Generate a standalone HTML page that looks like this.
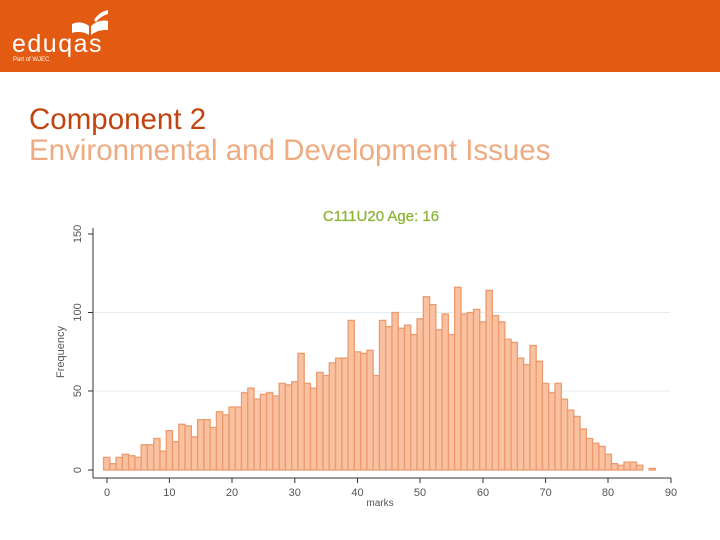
<!DOCTYPE html>
<html><head><meta charset="utf-8"><style>
body{margin:0;width:720px;height:540px;background:#fff;overflow:hidden;font-family:"Liberation Sans",sans-serif;position:relative}
.hdr{position:absolute;left:0;top:0;width:720px;height:72px;background:#e35b12}
.t1{position:absolute;left:29px;top:104px;font-size:29.5px;color:#c0440f;line-height:32px}
.t2{position:absolute;left:29px;top:135px;font-size:29.5px;color:#eeab82;line-height:32px}
rect{vector-effect:non-scaling-stroke}
</style></head><body>
<div class="hdr">
<svg width="160" height="72" style="position:absolute;left:0;top:0">
<path d="M72 24 Q81 20 89 26 L89 35 Q81 30 72 33 Z" fill="#fff"/>
<path d="M91 26 Q99 19 108 21 L108 30 Q99 29 91 35 Z" fill="#fff"/>
<path d="M94 20 Q99 12 108 10 L108 14 Q101 16 96 22 Z" fill="#fff"/>
<text x="12" y="52" font-family="Liberation Sans" font-size="25" letter-spacing="1.5" fill="#fff">eduqas</text>
<text x="13" y="61" font-family="Liberation Sans" font-size="6" fill="#fff">Part of WJEC</text>
</svg>
</div>
<div class="t1">Component 2</div>
<div class="t2">Environmental and Development Issues</div>
<svg width="720" height="540" style="position:absolute;left:0;top:0">
<text x="381" y="221" text-anchor="middle" font-size="15" fill="#8db33a" stroke="#8db33a" stroke-width="0.3" font-family="Liberation Sans">C111U20 Age: 16</text>
<line x1="95" y1="312.5" x2="670" y2="312.5" stroke="#e4eef2"/>
<line x1="95" y1="391" x2="670" y2="391" stroke="#e4eef2"/>
<line x1="93" y1="228" x2="93" y2="478" stroke="#333"/>
<line x1="93" y1="478" x2="671" y2="478" stroke="#333"/>
<g stroke="#333"><line x1="88" y1="470" x2="93" y2="470"/><line x1="88" y1="391" x2="93" y2="391"/><line x1="88" y1="312.5" x2="93" y2="312.5"/><line x1="88" y1="234" x2="93" y2="234"/>
<line x1="107" y1="478" x2="107" y2="483"/><line x1="169.4" y1="478" x2="169.4" y2="483"/><line x1="232" y1="478" x2="232" y2="483"/><line x1="294.8" y1="478" x2="294.8" y2="483"/><line x1="357.5" y1="478" x2="357.5" y2="483"/><line x1="420" y1="478" x2="420" y2="483"/><line x1="483" y1="478" x2="483" y2="483"/><line x1="545.6" y1="478" x2="545.6" y2="483"/><line x1="608" y1="478" x2="608" y2="483"/><line x1="671" y1="478" x2="671" y2="483"/></g>
<g font-size="11" fill="#555" font-family="Liberation Sans" text-anchor="middle">
<text transform="translate(81,470) rotate(-90)">0</text>
<text transform="translate(81,391) rotate(-90)">50</text>
<text transform="translate(81,312.5) rotate(-90)">100</text>
<text transform="translate(81,234) rotate(-90)">150</text>
<text transform="translate(64,352) rotate(-90)">Frequency</text>
<text x="107" y="496">0</text><text x="169.4" y="496">10</text><text x="232" y="496">20</text><text x="294.8" y="496">30</text><text x="357.5" y="496">40</text><text x="420" y="496">50</text><text x="483" y="496">60</text><text x="545.6" y="496">70</text><text x="608" y="496">80</text><text x="671" y="496">90</text>
<text x="380" y="506" font-size="10">marks</text>
</g>
<g transform="translate(106.7,470) scale(6.27,-1.575)" fill="#f9c1a0" stroke="#ec9a6e" stroke-width="1.3">
<rect x="-0.5" width="1" height="8"/><rect x="0.5" width="1" height="4"/><rect x="1.5" width="1" height="8"/><rect x="2.5" width="1" height="10"/><rect x="3.5" width="1" height="9"/><rect x="4.5" width="1" height="8"/><rect x="5.5" width="1" height="16"/><rect x="6.5" width="1" height="16"/><rect x="7.5" width="1" height="20"/><rect x="8.5" width="1" height="12"/>
<rect x="9.5" width="1" height="25"/><rect x="10.5" width="1" height="18"/><rect x="11.5" width="1" height="29"/><rect x="12.5" width="1" height="28"/><rect x="13.5" width="1" height="21"/><rect x="14.5" width="1" height="32"/><rect x="15.5" width="1" height="32"/><rect x="16.5" width="1" height="27"/><rect x="17.5" width="1" height="37"/><rect x="18.5" width="1" height="35"/>
<rect x="19.5" width="1" height="40"/><rect x="20.5" width="1" height="40"/><rect x="21.5" width="1" height="49"/><rect x="22.5" width="1" height="52"/><rect x="23.5" width="1" height="45"/><rect x="24.5" width="1" height="48"/><rect x="25.5" width="1" height="49"/><rect x="26.5" width="1" height="47"/><rect x="27.5" width="1" height="55"/><rect x="28.5" width="1" height="54"/>
<rect x="29.5" width="1" height="56"/><rect x="30.5" width="1" height="74"/><rect x="31.5" width="1" height="55"/><rect x="32.5" width="1" height="52"/><rect x="33.5" width="1" height="62"/><rect x="34.5" width="1" height="60"/><rect x="35.5" width="1" height="68"/><rect x="36.5" width="1" height="71"/><rect x="37.5" width="1" height="71"/><rect x="38.5" width="1" height="95"/>
<rect x="39.5" width="1" height="75"/><rect x="40.5" width="1" height="74"/><rect x="41.5" width="1" height="76"/><rect x="42.5" width="1" height="60"/><rect x="43.5" width="1" height="95"/><rect x="44.5" width="1" height="91"/><rect x="45.5" width="1" height="100"/><rect x="46.5" width="1" height="90"/><rect x="47.5" width="1" height="92"/><rect x="48.5" width="1" height="86"/>
<rect x="49.5" width="1" height="96"/><rect x="50.5" width="1" height="110"/><rect x="51.5" width="1" height="105"/><rect x="52.5" width="1" height="89"/><rect x="53.5" width="1" height="99"/><rect x="54.5" width="1" height="86"/><rect x="55.5" width="1" height="116"/><rect x="56.5" width="1" height="99"/><rect x="57.5" width="1" height="100"/><rect x="58.5" width="1" height="102"/>
<rect x="59.5" width="1" height="94"/><rect x="60.5" width="1" height="114"/><rect x="61.5" width="1" height="98"/><rect x="62.5" width="1" height="94"/><rect x="63.5" width="1" height="83"/><rect x="64.5" width="1" height="81"/><rect x="65.5" width="1" height="71"/><rect x="66.5" width="1" height="67"/><rect x="67.5" width="1" height="79"/><rect x="68.5" width="1" height="69"/>
<rect x="69.5" width="1" height="55"/><rect x="70.5" width="1" height="49"/><rect x="71.5" width="1" height="55"/><rect x="72.5" width="1" height="45"/><rect x="73.5" width="1" height="38"/><rect x="74.5" width="1" height="34"/><rect x="75.5" width="1" height="26"/><rect x="76.5" width="1" height="20"/><rect x="77.5" width="1" height="17"/><rect x="78.5" width="1" height="15"/>
<rect x="79.5" width="1" height="10"/><rect x="80.5" width="1" height="4"/><rect x="81.5" width="1" height="3"/><rect x="82.5" width="1" height="5"/><rect x="83.5" width="1" height="5"/><rect x="84.5" width="1" height="3"/><rect x="86.5" width="1" height="1"/>
</g>
</svg>
</body></html>
